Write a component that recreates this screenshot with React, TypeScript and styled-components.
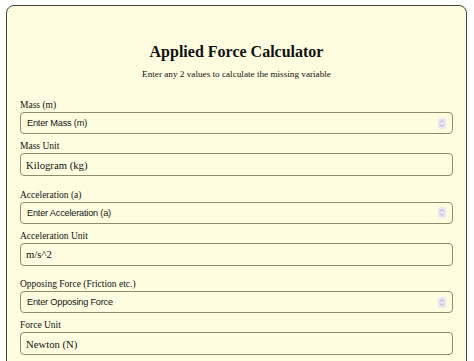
import React, { useState } from 'react';
import styled, { createGlobalStyle } from 'styled-components';

const GlobalStyle = createGlobalStyle`
  html, body {
    margin: 0;
    padding: 0;
    background: #ffffff;
  }
`;

const Page = styled.div`
  padding: 5px 7px 0 6px;
`;

const Card = styled.div`
  background: #fffde0;
  border: 1.5px solid #45453f;
  border-radius: 8px;
  padding: 35px 13px 20px 13px;
  font-family: 'Liberation Serif', 'Times New Roman', serif;
  color: #111;
`;

const Title = styled.h1`
  margin: 0;
  text-align: center;
  font-size: 16px;
  font-weight: 700;
  line-height: 22px;
`;

const Subtitle = styled.p`
  margin: 5px 0 19px;
  text-align: center;
  font-size: 9.2px;
  line-height: 12px;
`;

const Group = styled.div`
  display: flex;
  flex-direction: column;
  margin-bottom: 12.5px;
`;

const Label = styled.label`
  display: block;
  font-size: 9.5px;
  line-height: 12px;
  margin-bottom: 1px;
`;

const Field = styled.div`
  margin-bottom: 6px;
`;

const NumberBox = styled.div`
  display: flex;
  align-items: center;
  height: 22px;
  box-sizing: border-box;
  border: 1px solid #8f8d6c;
  border-radius: 4px;
  padding: 0 6px 0 6px;
`;

const NumberInput = styled.input`
  flex: 1;
  border: none;
  background: transparent;
  outline: none;
  padding: 0;
  font-family: 'Liberation Sans', Arial, sans-serif;
  font-size: 9.2px;
  letter-spacing: -0.2px;
  color: #151515;

  &::placeholder {
    color: #151515;
  }
`;

const Spinner = styled.span`
  display: flex;
  align-items: center;
  justify-content: center;
  width: 8px;
  height: 11px;
  background: #e9e8f2;
  border-radius: 2px;
`;

const UnitSelect = styled.select`
  display: block;
  width: 100%;
  height: 23px;
  box-sizing: border-box;
  border: 1px solid #8f8d6c;
  border-radius: 4px;
  padding: 0 5px;
  background: transparent;
  appearance: none;
  font-family: 'Liberation Serif', 'Times New Roman', serif;
  font-size: 10.7px;
  color: #111;
  outline: none;
`;

const SpinIcon = () => (
  <svg width="6" height="9" viewBox="0 0 6 9">
    <path d="M1 3.5 L3 1.5 L5 3.5" fill="none" stroke="#9a9aa8" strokeWidth="0.8" />
    <path d="M1 5.5 L3 7.5 L5 5.5" fill="none" stroke="#9a9aa8" strokeWidth="0.8" />
  </svg>
);

type Row = {
  label: string;
  placeholder: string;
  unitLabel: string;
  units: string[];
};

const rows: Row[] = [
  { label: 'Mass (m)', placeholder: 'Enter Mass (m)', unitLabel: 'Mass Unit', units: ['Kilogram (kg)', 'Gram (g)', 'Pound (lb)'] },
  { label: 'Acceleration (a)', placeholder: 'Enter Acceleration (a)', unitLabel: 'Acceleration Unit', units: ['m/s^2', 'ft/s^2'] },
  { label: 'Opposing Force (Friction etc.)', placeholder: 'Enter Opposing Force', unitLabel: 'Force Unit', units: ['Newton (N)', 'Kilonewton (kN)', 'Pound-force (lbf)'] },
];

const App: React.FC = () => {
  const [values, setValues] = useState<string[]>(['', '', '']);

  return (
    <Page>
      <GlobalStyle />
      <Card>
        <Title>Applied Force Calculator</Title>
        <Subtitle>Enter any 2 values to calculate the missing variable</Subtitle>
        {rows.map((row, i) => (
          <Group key={row.label}>
            <Field>
              <Label>{row.label}</Label>
              <NumberBox>
                <NumberInput
                  type="text"
                  inputMode="decimal"
                  placeholder={row.placeholder}
                  value={values[i]}
                  onChange={e => {
                    const next = [...values];
                    next[i] = e.target.value;
                    setValues(next);
                  }}
                />
                <Spinner>
                  <SpinIcon />
                </Spinner>
              </NumberBox>
            </Field>
            <div>
              <Label>{row.unitLabel}</Label>
              <UnitSelect defaultValue={row.units[0]}>
                {row.units.map(u => (
                  <option key={u}>{u}</option>
                ))}
              </UnitSelect>
            </div>
          </Group>
        ))}
      </Card>
    </Page>
  );
};

export default App;
